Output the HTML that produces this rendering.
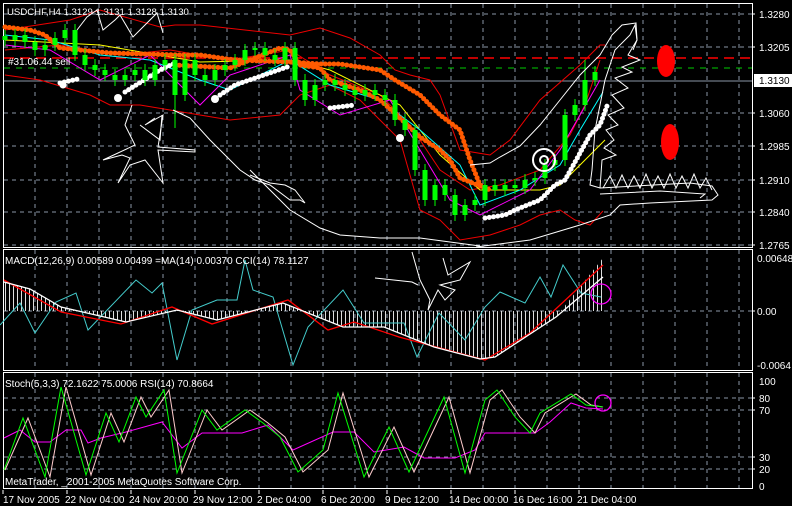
<!DOCTYPE html>
<html><head><meta charset="utf-8"><style>
body{margin:0;background:#000;width:792px;height:506px;overflow:hidden}
svg{display:block}
text{font-family:"Liberation Sans",sans-serif;font-size:10px;fill:#fff}
</style></head><body>
<svg width="792" height="506" viewBox="0 0 792 506" xmlns="http://www.w3.org/2000/svg">
<defs>
<pattern id="st" width="4" height="10" patternUnits="userSpaceOnUse"><rect x="1" y="0" width="1" height="10" fill="#ddd"/></pattern>
</defs>
<rect width="792" height="506" fill="#000"/>
<g stroke="#8a96a6" stroke-width="1" stroke-dasharray="4,4" fill="none">
<path d="M35 4V247M67 4V247M99 4V247M131 4V247M163 4V247M195 4V247M227 4V247M259 4V247M291 4V247M323 4V247M355 4V247M387 4V247M419 4V247M451 4V247M483 4V247M515 4V247M547 4V247M579 4V247M611 4V247M643 4V247M675 4V247M707 4V247M739 4V247"/>
<path d="M35 250V370M67 250V370M99 250V370M131 250V370M163 250V370M195 250V370M227 250V370M259 250V370M291 250V370M323 250V370M355 250V370M387 250V370M419 250V370M451 250V370M483 250V370M515 250V370M547 250V370M579 250V370M611 250V370M643 250V370M675 250V370M707 250V370M739 250V370"/>
<path d="M35 373V488M67 373V488M99 373V488M131 373V488M163 373V488M195 373V488M227 373V488M259 373V488M291 373V488M323 373V488M355 373V488M387 373V488M419 373V488M451 373V488M483 373V488M515 373V488M547 373V488M579 373V488M611 373V488M643 373V488M675 373V488M707 373V488M739 373V488"/>
<path d="M4 14H752M4 47H752M4 113H752M4 146H752M4 180H752M4 212H752M4 245H752"/>
<path d="M4 311H752"/>
<path d="M4 398H752M4 410H752M4 457H752M4 469H752"/>
</g>
<path d="M4 81H752" stroke="#8a96a6"/>
<path d="M4 58H752" stroke="#f00" stroke-dasharray="10,6" stroke-width="1.5"/>
<path d="M4 68H752" stroke="#0c0" stroke-dasharray="6,6"/>
<g stroke="#fff" fill="none">
<rect x="3.5" y="3.5" width="749" height="244"/>
<rect x="3.5" y="249.5" width="749" height="121"/>
<rect x="3.5" y="372.5" width="749" height="116"/>
</g>
<g fill="none" stroke="#e00" stroke-width="1">
<polyline points="5,30 70,20 100,10 160,27 175,25 200,25 290,35 320,28 350,38 380,55 395,70 410,75 430,80 440,95 460,150 490,155 510,140 540,100 580,65 600,45 605,45"/>
<polyline points="5,75 40,80 90,95 110,105 140,105 200,115 230,120 280,115 300,95 330,85 360,100 400,140 420,210 440,220 460,240 490,235 520,225 540,215 560,210 575,220 590,225 603,211"/>
<polyline points="5,50 60,45 120,55 170,50 230,60 290,50 330,75 380,95 410,125 440,170 470,190 500,185 540,170 570,135 585,105 600,60"/>
</g>
<polyline fill="none" stroke="#ff0" points="5,40 100,45 200,62 290,60 330,70 400,105 440,155 480,190 540,190 560,185 605,140"/>
<polyline fill="none" stroke="#0ff" points="5,35 50,40 100,55 150,60 200,80 230,90 290,60 330,85 380,100 420,130 460,165 480,205 520,190 560,165 580,130 603,92"/>
<polyline fill="none" stroke="#f0f" points="5,45 50,50 100,80 150,55 180,85 200,105 230,75 290,55 300,90 340,115 390,100 420,150 450,200 480,215 530,190 560,150 600,80"/>
<g fill="none" stroke="#ff5a00" stroke-width="5" stroke-linecap="round" stroke-dasharray="0.1,4.2">
<polyline points="5,27 30,30 45,35 60,48 110,53 180,55 200,55 235,60 290,62 320,64 340,64 380,70 395,80 420,95 440,115 460,130 470,160 480,185 490,190"/>
<polyline points="175,65 230,68 280,48 290,50 300,65 320,68 330,80 360,90 380,100 400,118 420,137 440,150 450,160 460,178 485,188"/>
</g>
<g fill="none" stroke="#fff" stroke-width="5" stroke-linecap="round" stroke-dasharray="0.1,4.2">
<polyline points="60,83 78,79"/>
<polyline points="125,92 160,70 175,63"/>
<polyline points="220,95 235,85 290,66"/>
<polyline points="330,108 355,105"/>
<polyline points="485,218 505,215 515,210 540,200 555,185 565,180 590,135 600,125 607,106"/>
</g>
<g fill="#fff"><circle cx="63" cy="85" r="3.5"/><circle cx="118" cy="98" r="4"/><circle cx="215" cy="99" r="4"/><circle cx="400" cy="138" r="4"/></g>
<path fill="none" stroke="#00ff00" stroke-width="1" d="M5 30V46M15 29V46M25 29V48M35 36V56M45 39V56M55 32V51M65 24V44M75 24V61M85 49V71M95 59V76M105 64V81M115 69V86M125 69V86M135 64V81M145 64V86M155 59V86M165 54V71M175 54V128M185 54V101M195 54V81M205 69V86M215 64V86M225 59V76M235 54V71M245 44V66M255 42V56M265 42V61M275 49V66M285 42V66M295 42V86M305 74V106M315 79V106M325 74V91M335 74V91M345 79V96M355 84V101M365 84V101M375 84V101M385 89V106M395 94V126M405 114V136M415 124V176M425 164V206M435 179V206M445 179V201M455 189V221M465 199V221M475 194V211M485 179V206M495 179V196M505 179V196M515 179V194M525 174V194M535 172V186M545 159V184M555 154V171M565 109V166M575 99V121M585 60V111M595 66V86"/>
<path fill="none" stroke="#00ff00" stroke-width="5" d="M5 36V40M15 40V35M25 35V42M35 42V50M45 50V45M55 45V38M65 38V30M75 30V55M85 55V65M95 65V70M105 70V75M115 75V80M125 80V75M135 75V70M145 70V80M155 80V65M165 65V60M175 60V95M185 95V60M195 60V75M205 75V80M215 80V70M225 70V65M235 65V60M245 60V50M255 50V48M265 48V55M275 55V60M285 60V48M295 48V80M305 80V100M315 100V85M325 85V80M335 80V85M345 85V90M355 90V95M365 95V90M375 90V95M385 95V100M395 100V120M405 120V130M415 130V170M425 170V200M435 200V185M445 185V195M455 195V215M465 215V205M475 205V200M485 200V185M495 185V190M505 190V185M515 185V188M525 188V180M535 180V178M545 178V165M555 165V160M565 160V115M575 115V105M585 105V80M595 80V72"/>
<g fill="none" stroke="#fff" stroke-width="1">
<polyline points="77,30 87,17 97,10 103,30 115,20 120,15 133,37 157,13 163,33"/>
<polyline points="173,110 190,118 210,140 240,170 255,180 270,185 290,200 300,200 305,203 295,190 285,185 270,183 250,175"/>
<polyline points="250,170 290,210 320,228 340,235 380,238 420,238 450,242 480,246"/>
<polyline points="476,247 530,240 580,225 610,215 620,205 650,203 712,200 718,195 712,186 690,183 600,188 590,185 592,170 595,130 605,80 615,50 630,35 635,25 637,40 633,50"/>
<polyline points="470,165 490,163 500,157 520,146 540,125 560,100 580,75 600,55 612,35 622,25 636,23 637,40 628,55 640,60 622,67 632,72 615,78 628,88 612,95 624,108 608,115 618,125 606,130 614,140 604,148 616,155 602,160 600,188"/>
<polyline points="603,188 610,176 616,188 622,175 628,188 634,176 640,188 646,174 652,188 658,176 664,188 670,174 676,188 682,176 688,188 694,174 700,188 706,178 712,190"/>
<polyline points="600,194 660,191 705,194 700,198"/>
<polyline points="132,105 125,125 135,145 103,160 122,155 130,158 118,183 130,165 145,160 163,183 158,150 195,152 195,150 158,147 163,115 145,125 155,118"/>
<polyline points="140,125 160,140 162,115"/>
<circle cx="544" cy="160" r="11" stroke-width="2"/><circle cx="544" cy="160" r="4" stroke-width="2"/>
<polyline points="412,252 420,280 430,300 428,310 438,290 445,300 455,290 440,285 460,280 470,262 448,275 443,258"/>
<polyline points="375,278 412,282 418,285"/>
</g>
<ellipse cx="666" cy="61" rx="9" ry="16" fill="#f00"/>
<ellipse cx="670" cy="142" rx="9" ry="18" fill="#f00"/>
<polygon fill="url(#st)" points="4,311 4,282 30,289 61,307 126,322 177,310 217,320 283,303 343,327 384,327 434,347 480,359 495,357 556,317 603,258 603,311"/>
<polyline fill="none" stroke="#4cc" points="0,325 20,303 35,333 56,302 76,293 88,330 136,280 152,293 162,283 177,360 192,310 217,300 237,300 245,260 253,290 273,297 293,365 308,327 343,290 364,323 384,323 404,323 417,357 439,313 465,340 485,307 500,292 525,303 540,277 551,297 563,265 581,293 601,297"/>
<polyline fill="none" stroke="#f00" stroke-width="1.3" points="4,280 61,312 121,324 172,307 212,324 288,300 328,330 354,322 399,337 485,360 530,333 603,265"/>
<polyline fill="none" stroke="#fff" stroke-width="1.3" points="4,282 30,289 61,307 126,322 177,310 217,320 283,303 343,327 384,327 434,347 480,359 495,357 556,317 603,277"/>
<circle cx="601" cy="294" r="10" fill="none" stroke="#f0f" stroke-width="1.3"/>
<polyline fill="none" stroke="#f0f" points="4,438 20,430 35,442 50,442 66,430 81,430 88,443 101,438 126,432 162,422 182,448 202,433 242,433 268,425 293,450 333,432 354,432 374,452 404,447 424,458 455,458 475,450 485,433 535,433 550,422 571,403 586,408 603,409"/>
<polyline fill="none" stroke="#fcc" points="5,470 28,418 50,477 66,387 91,475 111,413 124,442 141,397 151,417 169,390 182,473 207,410 222,430 250,410 268,423 285,437 303,472 328,450 343,393 369,477 394,427 414,472 449,397 470,473 490,400 502,390 520,417 535,433 545,413 576,394 591,405 603,407"/>
<polyline fill="none" stroke="#0f0" points="4,470 23,418 45,477 61,387 86,475 106,413 119,442 136,397 146,417 164,390 177,473 202,410 217,430 245,410 263,423 280,437 298,472 323,450 338,393 364,477 389,427 409,472 444,397 465,473 485,400 497,390 515,417 530,433 540,413 571,394 586,405 603,407"/>
<circle cx="603" cy="403" r="8" fill="none" stroke="#f0f" stroke-width="1.3"/>
<text x="7" y="15" style="font-size:9.6px">USDCHF,H4  1.3129 1.3131 1.3128 1.3130</text>
<text x="8" y="65">#31.06.44 sell</text>
<text x="5" y="264">MACD(12,26,9) 0.00589 0.00499  =MA(14) 0.00370  CCI(14) 78.1127</text>
<text x="5" y="387">Stoch(5,3,3) 72.1622 75.0006  RSI(14) 70.8664</text>
<text x="5" y="485">MetaTrader, _2001-2005 MetaQuotes Software Corp.</text>
<g>
<text x="759" y="18">1.3280</text><text x="759" y="51">1.3205</text>
<rect x="754" y="74" width="38" height="13" fill="#fff"/><text x="759" y="84" style="fill:#000">1.3130</text>
<text x="759" y="117">1.3060</text><text x="759" y="150">1.2985</text><text x="759" y="184">1.2910</text><text x="759" y="216">1.2840</text><text x="759" y="249">1.2765</text>
<text x="757" y="262">0.00648</text><text x="757" y="315">0.00</text><text x="757" y="369">-0.0064</text>
<text x="759" y="385">100</text><text x="759" y="402">80</text><text x="759" y="414">70</text><text x="759" y="461">30</text><text x="759" y="473">20</text><text x="759" y="490">0</text>
</g>
<g stroke="#fff"><path d="M752 14h3M752 47h3M752 113h3M752 146h3M752 180h3M752 212h3M752 245h3M752 311h3M752 398h3M752 410h3M752 457h3M752 469h3"/>
<path d="M3 490v4M67 490v4M131 490v4M195 490v4M259 490v4M323 490v4M387 490v4M451 490v4M515 490v4M579 490v4"/></g>
<text x="3" y="503">17 Nov 2005</text><text x="65" y="503">22 Nov 04:00</text><text x="129" y="503">24 Nov 20:00</text><text x="193" y="503">29 Nov 12:00</text><text x="257" y="503">2 Dec 04:00</text><text x="321" y="503">6 Dec 20:00</text><text x="385" y="503">9 Dec 12:00</text><text x="449" y="503">14 Dec 00:00</text><text x="513" y="503">16 Dec 16:00</text><text x="577" y="503">21 Dec 04:00</text>
</svg>
</body></html>
